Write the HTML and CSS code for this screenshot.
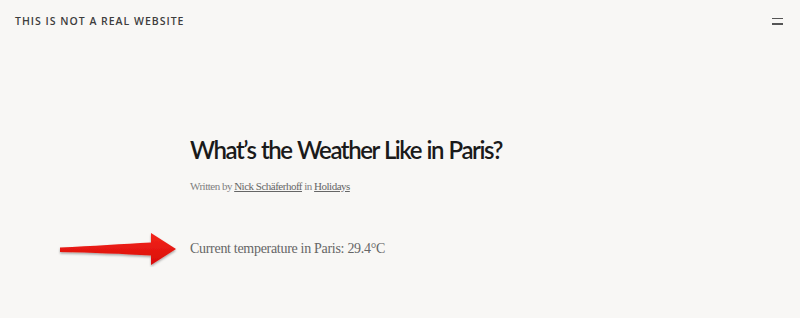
FILE: index.html
```
<!DOCTYPE html>
<html>
<head>
<meta charset="utf-8">
<link rel="stylesheet" href="styles.css">
</head>
<body>
<header class="site-header">
  <div class="site-title">THIS IS NOT A REAL WEBSITE</div>
  <button class="menu-toggle" aria-label="Menu"><span></span><span></span></button>
</header>
<main class="content">
  <h1 class="entry-title">What’s the Weather Like in Paris?</h1>
  <p class="byline">Written by <a href="#">Nick Schäferhoff</a> in <a href="#">Holidays</a></p>
  <div class="temp-row">
    <svg class="arrow" width="120" height="36" viewBox="0 0 120 36">
      <defs>
        <linearGradient id="g" x1="0" y1="0" x2="0" y2="1">
          <stop offset="0" stop-color="#f4261c"/>
          <stop offset="1" stop-color="#d80c08"/>
        </linearGradient>
        <filter id="sh" x="-10%" y="-20%" width="120%" height="150%">
          <feDropShadow dx="0" dy="1.5" stdDeviation="1.2" flood-color="#000" flood-opacity="0.35"/>
        </filter>
      </defs>
      <path d="M2 16.5 C35 15 65 13 93 11.5 L93 2 L118 18 L93 34 L93 24.5 C65 23 35 21.5 2 21 Z" fill="url(#g)" filter="url(#sh)"/>
    </svg>
    <p class="temp">Current temperature in Paris: 29.4°C</p>
  </div>
</main>
</body>
</html>
```
FILE: styles.css
```
html, body { margin: 0; padding: 0; }
body {
  background: #f8f7f5;
  width: 800px;
  height: 318px;
  overflow: hidden;
  font-family: "Liberation Serif", serif;
}
.site-header {
  display: flex;
  justify-content: space-between;
  align-items: center;
  padding: 14px 17px 0 15px;
  height: 14px;
}
.site-title {
  font-family: "Open Sans", sans-serif;
  font-weight: 600;
  font-size: 10.5px;
  letter-spacing: 1.0px;
  color: #3d3d3d;
}
.menu-toggle {
  border: 0;
  background: none;
  padding: 0;
  display: flex;
  flex-direction: column;
  gap: 4px;
  width: 11px;
}
.menu-toggle span {
  display: block;
  height: 1.5px;
  background: #555;
  width: 11px;
}
.content {
  padding: 104px 0 0 190px;
}
.entry-title {
  margin: 0;
  font-family: "Lato", sans-serif;
  font-weight: 600;
  font-size: 24px;
  letter-spacing: -1.45px;
  word-spacing: 1px;
  color: #1a1a1a;
  line-height: 36px;
}
.byline {
  margin: 12px 0 0;
  font-size: 11px;
  color: #808080;
  letter-spacing: -0.5px;
}
.byline a { color: #666; }
.temp-row {
  display: flex;
  align-items: center;
  margin: 39px 0 0 -132px;
}
.arrow { margin-right: 12px; }
.temp {
  margin: 0;
  font-size: 14px;
  color: #666;
  letter-spacing: -0.3px;
}
```
